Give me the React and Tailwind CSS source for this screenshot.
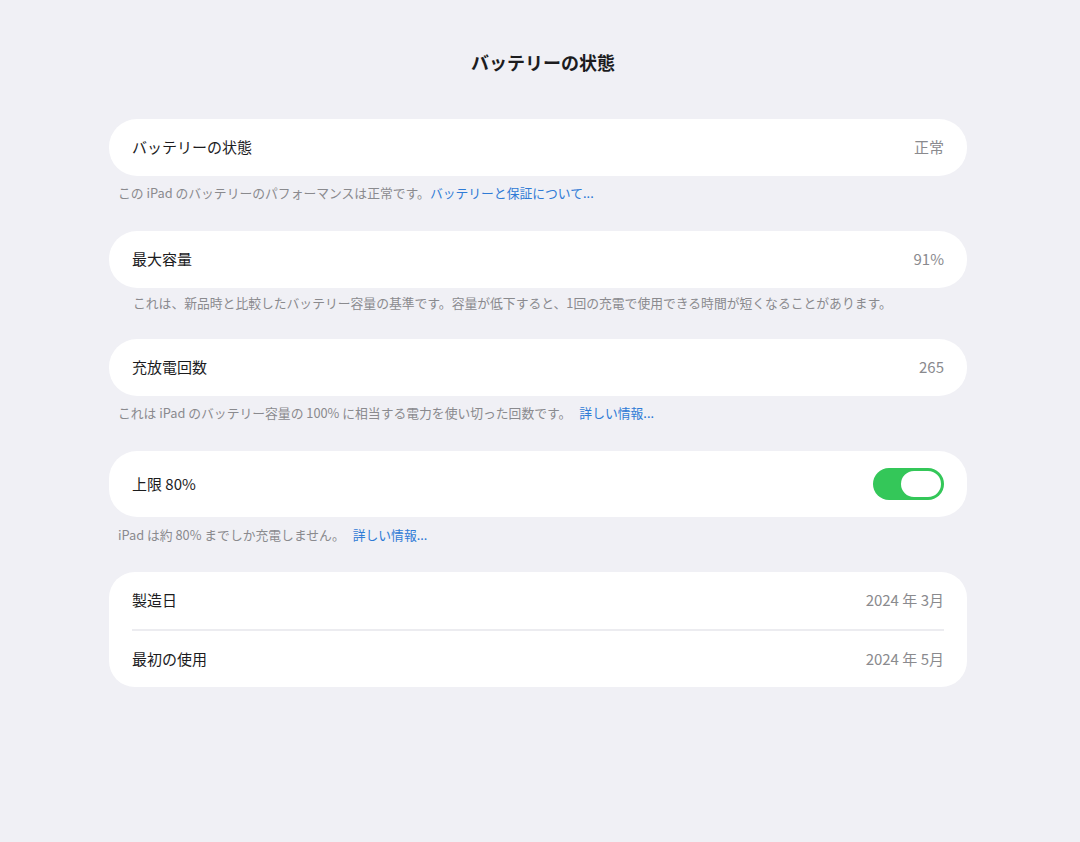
import React from "react";

const font = { fontFamily: '"Noto Sans CJK JP", "Noto Sans", sans-serif' };

function Row({ label, value, children, h = "h-[57px]" }) {
  return (
    <div className={`flex items-center justify-between ${h} pl-[23px] pr-[23px]`}>
      <span className="text-[15px] text-[#1c1c1e]">{label}</span>
      {value && <span className="text-[15px] text-[#8a8a8e]">{value}</span>}
      {children}
    </div>
  );
}

function Toggle() {
  return (
    <div className="flex h-[32px] w-[71px] items-center justify-end rounded-full bg-[#34c759] pr-[1px]">
      <div className="h-[30px] w-[44px] rounded-full border-[2px] border-[#34c759] bg-white" />
    </div>
  );
}

export default function App() {
  return (
    <div style={font} className="min-h-[842px] w-full bg-[#f0f0f5]">
      <div className="ml-[109px] flex w-[858px] flex-col pt-[50px]">
        <h1 className="mb-[45px] h-[24px] pl-[10px] text-center text-[18px] font-bold leading-[24px] text-[#1c1c1e]">
          バッテリーの状態
        </h1>

        <div className="rounded-[28px] bg-white">
          <Row label="バッテリーの状態" value="正常" />
        </div>
        <p className="mb-[30px] mt-[9px] pl-[9px] text-[12.8px] leading-[16px] text-[#8a8a8e]">
          この iPad のバッテリーのパフォーマンスは正常です。
          <span className="text-[#2f7bd6]">バッテリーと保証について...</span>
        </p>

        <div className="rounded-[28px] bg-white">
          <Row label="最大容量" value="91%" />
        </div>
        <p className="mb-[28px] mt-[7px] pl-[24px] text-[12.8px] leading-[16px] text-[#8a8a8e]">
          これは、新品時と比較したバッテリー容量の基準です。容量が低下すると、1回の充電で使用できる時間が短くなることがあります。
        </p>

        <div className="rounded-[28px] bg-white">
          <Row label="充放電回数" value="265" />
        </div>
        <p className="mb-[30px] mt-[9px] pl-[9px] text-[12.8px] leading-[16px] text-[#8a8a8e]">
          これは iPad のバッテリー容量の 100% に相当する電力を使い切った回数です。
          <span className="ml-[8px] text-[#2f7bd6]">詳しい情報...</span>
        </p>

        <div className="rounded-[28px] bg-white">
          <Row label="上限 80%" h="h-[66px]">
            <Toggle />
          </Row>
        </div>
        <p className="mb-[29px] mt-[10px] pl-[9px] text-[12.8px] leading-[16px] text-[#8a8a8e]">
          iPad は約 80% までしか充電しません。
          <span className="ml-[8px] text-[#2f7bd6]">詳しい情報...</span>
        </p>

        <div className="rounded-[26px] bg-white">
          <Row label="製造日" value="2024 年 3月" />
          <div className="mx-[23px] h-[2px] bg-[#ececf0]" />
          <Row label="最初の使用" value="2024 年 5月" h="h-[56px]" />
        </div>
      </div>
    </div>
  );
}
